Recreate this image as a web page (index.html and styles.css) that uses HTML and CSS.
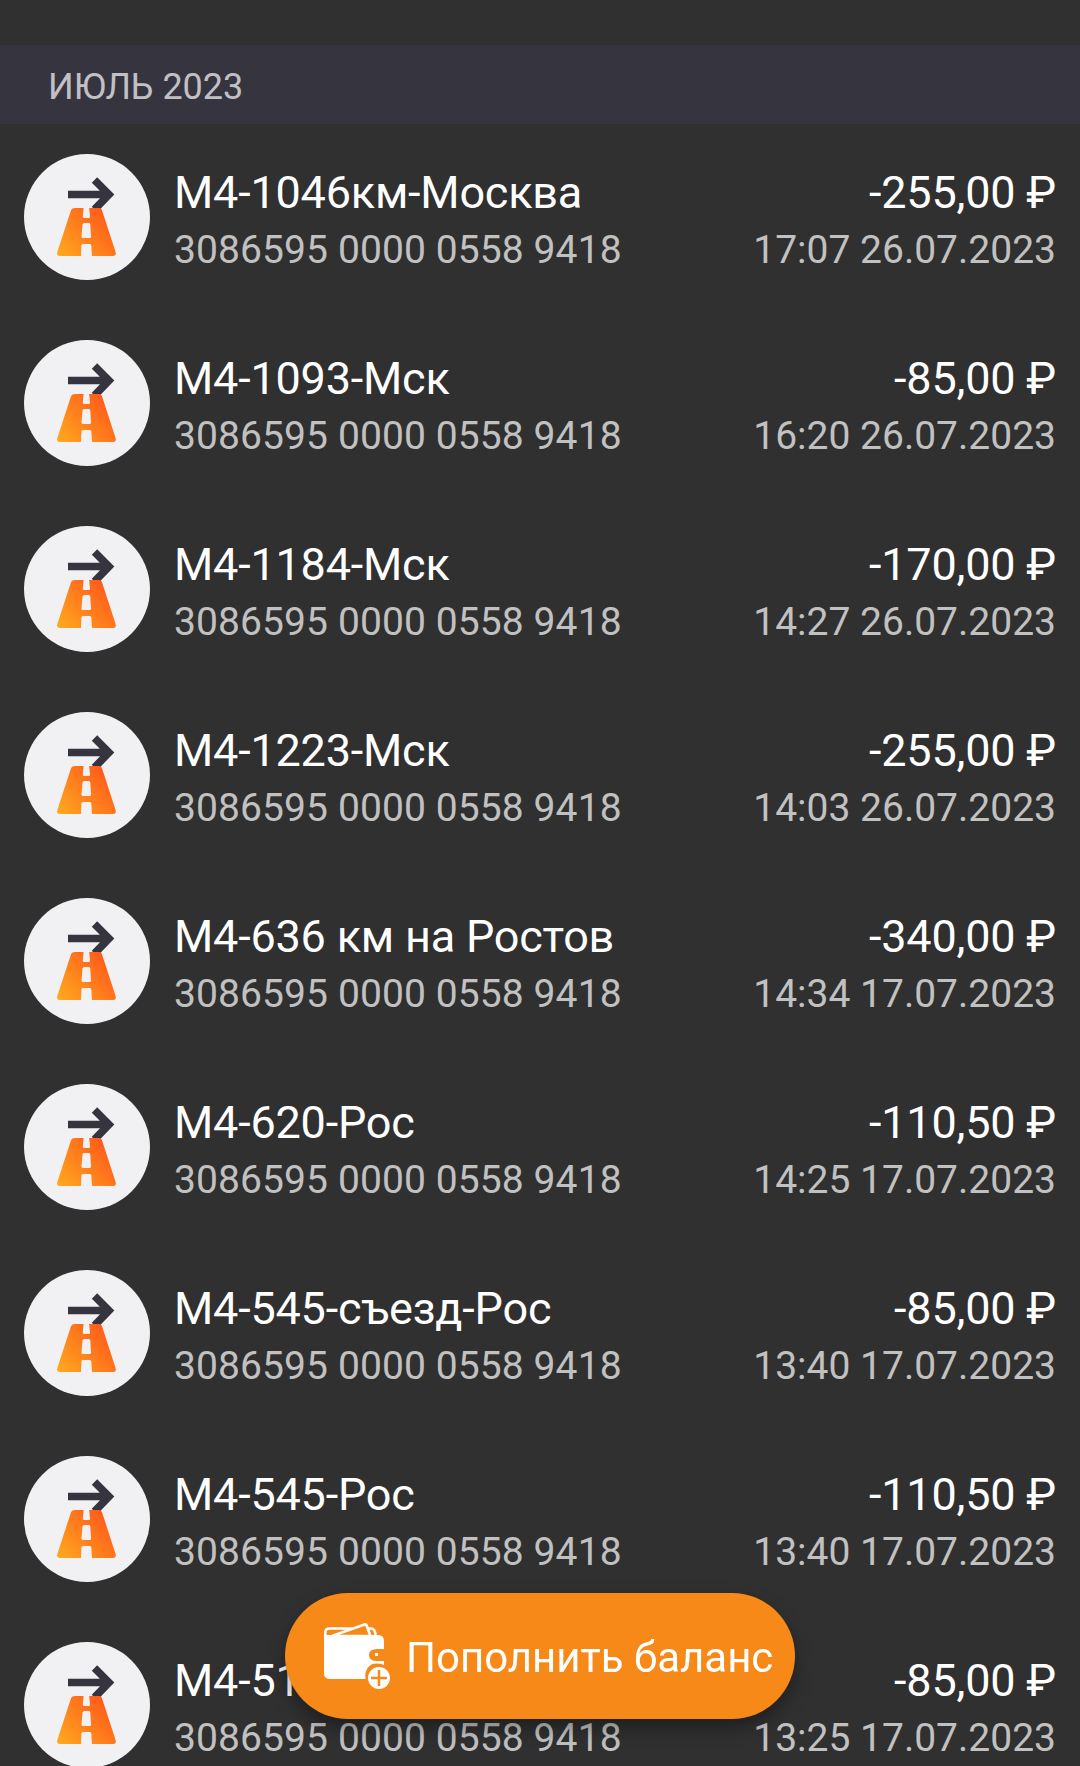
FILE: index.html
```html
<!DOCTYPE html>
<html lang="ru">
<head>
    <meta charset="utf-8">
    <title>История операций</title>
    <link rel="stylesheet" href="styles.css">
</head>
<body>
    <!-- shared icons -->
    <svg class="sprite">
        <defs>
            <linearGradient id="roadFill" gradientUnits="userSpaceOnUse" x1="34" y1="102" x2="82" y2="58">
                <stop offset="0" stop-color="#ffa91f" />
                <stop offset="1" stop-color="#ff5a1a" />
            </linearGradient>
            <symbol id="road" viewBox="0 0 126 126">
                <path d="M44 40.500H84M70.500 26L85 40.500L70.500 55.500" fill="none" stroke="#35343f" stroke-width="7.600" />
                <path d="M51 54H75Q77.300 54 78 56.200L91.600 98Q92.600 102 89 102H36Q32.300 102 33.300 98L47 56.200Q47.800 54 51 54Z" fill="url(#roadFill)" />
                <path d="M59.600 54H65.200L66 62.500Q66.100 64 64.600 64H60.200Q58.700 64 58.800 62.500ZM60.300 69H64.700Q66.200 69 66.300 70.500L67 82.500Q67 84 65.500 84H59Q57.500 84 57.500 82.500L58.500 70.500Q58.700 69 60.300 69ZM58.700 90H65.800Q67.200 90 67.300 91.500L68 102H57L57.400 91.500Q57.500 90 58.700 90Z" fill="#f1f1f3" />
            </symbol>
        </defs>
    </svg>

    <h1 class="month">ИЮЛЬ 2023</h1>

    <ul class="list">
        <li class="trip">
            <svg class="icon"><use href="#road" /></svg>
            <div class="info"><p class="title">М4-1046км-Москва</p><p class="sub">3086595 0000 0558 9418</p></div>
            <div class="cost"><p class="title">-255,00 ₽</p><p class="sub">17:07 26.07.2023</p></div>
        </li>
        <li class="trip">
            <svg class="icon"><use href="#road" /></svg>
            <div class="info"><p class="title">М4-1093-Мск</p><p class="sub">3086595 0000 0558 9418</p></div>
            <div class="cost"><p class="title">-85,00 ₽</p><p class="sub">16:20 26.07.2023</p></div>
        </li>
        <li class="trip">
            <svg class="icon"><use href="#road" /></svg>
            <div class="info"><p class="title">М4-1184-Мск</p><p class="sub">3086595 0000 0558 9418</p></div>
            <div class="cost"><p class="title">-170,00 ₽</p><p class="sub">14:27 26.07.2023</p></div>
        </li>
        <li class="trip">
            <svg class="icon"><use href="#road" /></svg>
            <div class="info"><p class="title">М4-1223-Мск</p><p class="sub">3086595 0000 0558 9418</p></div>
            <div class="cost"><p class="title">-255,00 ₽</p><p class="sub">14:03 26.07.2023</p></div>
        </li>
        <li class="trip">
            <svg class="icon"><use href="#road" /></svg>
            <div class="info"><p class="title">М4-636 км на Ростов</p><p class="sub">3086595 0000 0558 9418</p></div>
            <div class="cost"><p class="title">-340,00 ₽</p><p class="sub">14:34 17.07.2023</p></div>
        </li>
        <li class="trip">
            <svg class="icon"><use href="#road" /></svg>
            <div class="info"><p class="title">М4-620-Рос</p><p class="sub">3086595 0000 0558 9418</p></div>
            <div class="cost"><p class="title">-110,50 ₽</p><p class="sub">14:25 17.07.2023</p></div>
        </li>
        <li class="trip">
            <svg class="icon"><use href="#road" /></svg>
            <div class="info"><p class="title">М4-545-съезд-Рос</p><p class="sub">3086595 0000 0558 9418</p></div>
            <div class="cost"><p class="title">-85,00 ₽</p><p class="sub">13:40 17.07.2023</p></div>
        </li>
        <li class="trip">
            <svg class="icon"><use href="#road" /></svg>
            <div class="info"><p class="title">М4-545-Рос</p><p class="sub">3086595 0000 0558 9418</p></div>
            <div class="cost"><p class="title">-110,50 ₽</p><p class="sub">13:40 17.07.2023</p></div>
        </li>
        <li class="trip">
            <svg class="icon"><use href="#road" /></svg>
            <div class="info"><p class="title">М4-51</p><p class="sub">3086595 0000 0558 9418</p></div>
            <div class="cost"><p class="title">-85,00 ₽</p><p class="sub">13:25 17.07.2023</p></div>
        </li>
    </ul>

    <button class="topup">
        <svg class="wallet" viewBox="0 0 68 68">
            <path d="M2.300 13V9.500Q2.300 5.500 6.500 5.500H48Q52 5.500 52.500 12" fill="none" stroke="#fff" stroke-width="2.600" />
            <path d="M9 13L41.500 1.500Q43 1 43.600 2.500L47.500 13Z" fill="#f68917" stroke="#fff" stroke-width="2.600" />
            <path d="M1 12H55Q61 12 61 18V26H54Q46 26 46 32Q46 38 54 38H61V42Q46 37 42.500 50Q42 53 43 56H7Q1 56 1 50Z" fill="#fff" />
            <rect x="52" y="30" width="3" height="3" fill="#fff" />
            <circle cx="56" cy="55" r="13.500" fill="#f68917" />
            <circle cx="56" cy="55" r="11" fill="#fff" />
            <path d="M56 47V63M48 55H64" stroke="#f68917" stroke-width="2.500" />
        </svg>
        <span>Пополнить баланс</span>
    </button>
</body>
</html>
```
FILE: styles.css
```css
body {
    margin: 0;
    padding-top: 45px;
    height: 1766px;
    box-sizing: border-box;
    overflow: hidden;
    background-color: #303030;
    color: #fff;
    font-family: Roboto, Arial, sans-serif;
}

.sprite {
    position: absolute;
    width: 0;
    height: 0;
}

.month {
    margin: 0;
    padding: 3px 48px 0;
    height: 76px;
    line-height: 79px;
    background-color: #36343f;
    color: #c1c0c4;
    font-size: 36px;
    font-weight: normal;
}

.list {
    margin: 0;
    padding: 0;
    list-style: none;
}

.trip {
    display: flex;
    box-sizing: border-box;
    height: 186px;
    padding: 30px 24px;
}

.icon {
    width: 126px;
    height: 126px;
    border-radius: 50%;
    background-color: #f1f1f3;
}

.info {
    flex: 1;
    padding-left: 24px;
}

.cost {
    text-align: right;
}

.title,
.sub {
    margin: 0;
    white-space: nowrap;
}

.title {
    padding-top: 12px;
    font-size: 45px;
    line-height: 53px;
    letter-spacing: -0.2px;
}

.sub {
    padding-top: 8px;
    color: #c1c1c1;
    font-size: 39px;
    line-height: 46px;
}

.info .sub {
    letter-spacing: 0.1px;
}

/* floating over the list */
.topup {
    position: fixed;
    left: 285px;
    bottom: 47px;
    display: flex;
    align-items: center;
    width: 510px;
    height: 126px;
    padding: 3px 0 0 38px;
    border: none;
    border-radius: 63px;
    background-color: #f68917;
    color: #fff;
    font-family: inherit;
    font-size: 42px;
    white-space: nowrap;
    box-shadow: 0 9px 18px rgba(0, 0, 0, 0.35);
}

.wallet {
    width: 68px;
    height: 68px;
    margin: -2px 15px 0 0;
}
```
